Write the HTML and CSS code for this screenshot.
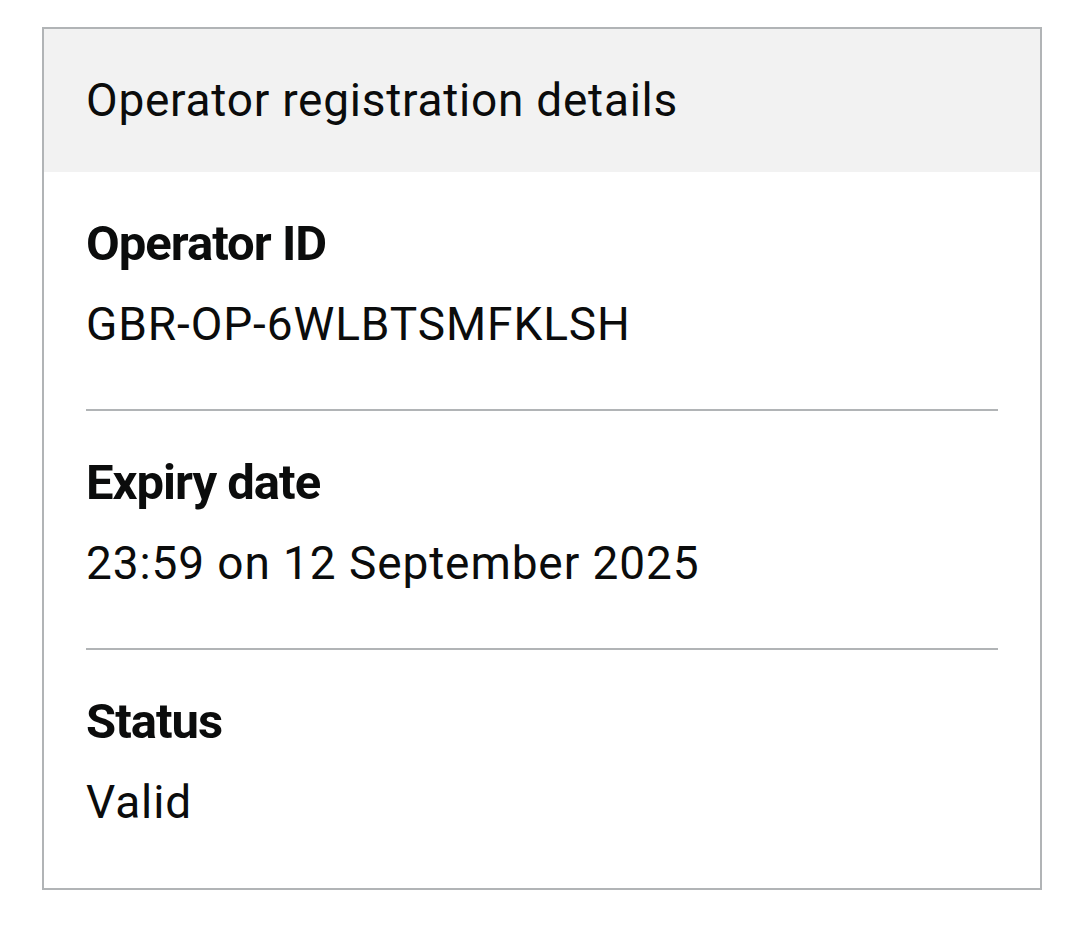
FILE: index.html
```html
<!DOCTYPE html>
<html lang="en">
<head>
<meta charset="utf-8">
<title>Operator registration details</title>
<link rel="stylesheet" href="styles.css">
</head>
<body>
<div class="card">
  <div class="card-header">
    <h2 class="card-title">Operator registration details</h2>
  </div>
  <dl class="summary">
    <div class="row">
      <dt class="key">Operator ID</dt>
      <dd class="value">GBR-OP-6WLBTSMFKLSH</dd>
    </div>
    <div class="row">
      <dt class="key">Expiry date</dt>
      <dd class="value">23:59 on 12 September 2025</dd>
    </div>
    <div class="row">
      <dt class="key">Status</dt>
      <dd class="value">Valid</dd>
    </div>
  </dl>
</div>
</body>
</html>
```

FILE: styles.css
```css
html, body {
  margin: 0;
  padding: 0;
  background: #ffffff;
}
body {
  font-family: Roboto, "Liberation Sans", Arial, sans-serif;
  color: #0b0c0c;
  padding: 27px 0 0 42px;
}
.card {
  width: 1000px;
  box-sizing: border-box;
  border: 2px solid #b1b4b6;
}
.card-header {
  background: #f2f2f2;
  padding: 45px 42px 46px;
}
.card-title {
  margin: 0;
  font-size: 46px;
  line-height: 52px;
  letter-spacing: 0.75px;
  font-weight: 400;
}
.summary {
  margin: 0;
  padding: 0 42px;
}
.row {
  padding: 46px 0 59px;
  border-bottom: 2px solid #b1b4b6;
}
.row:last-child {
  border-bottom: 0;
  padding-bottom: 60px;
}
.key {
  margin: 0;
  font-size: 49px;
  line-height: 52px;
  letter-spacing: -1px;
  font-weight: 700;
}
.value {
  margin: 28px 0 0;
  font-size: 46px;
  line-height: 52px;
  letter-spacing: 0.9px;
}
```
